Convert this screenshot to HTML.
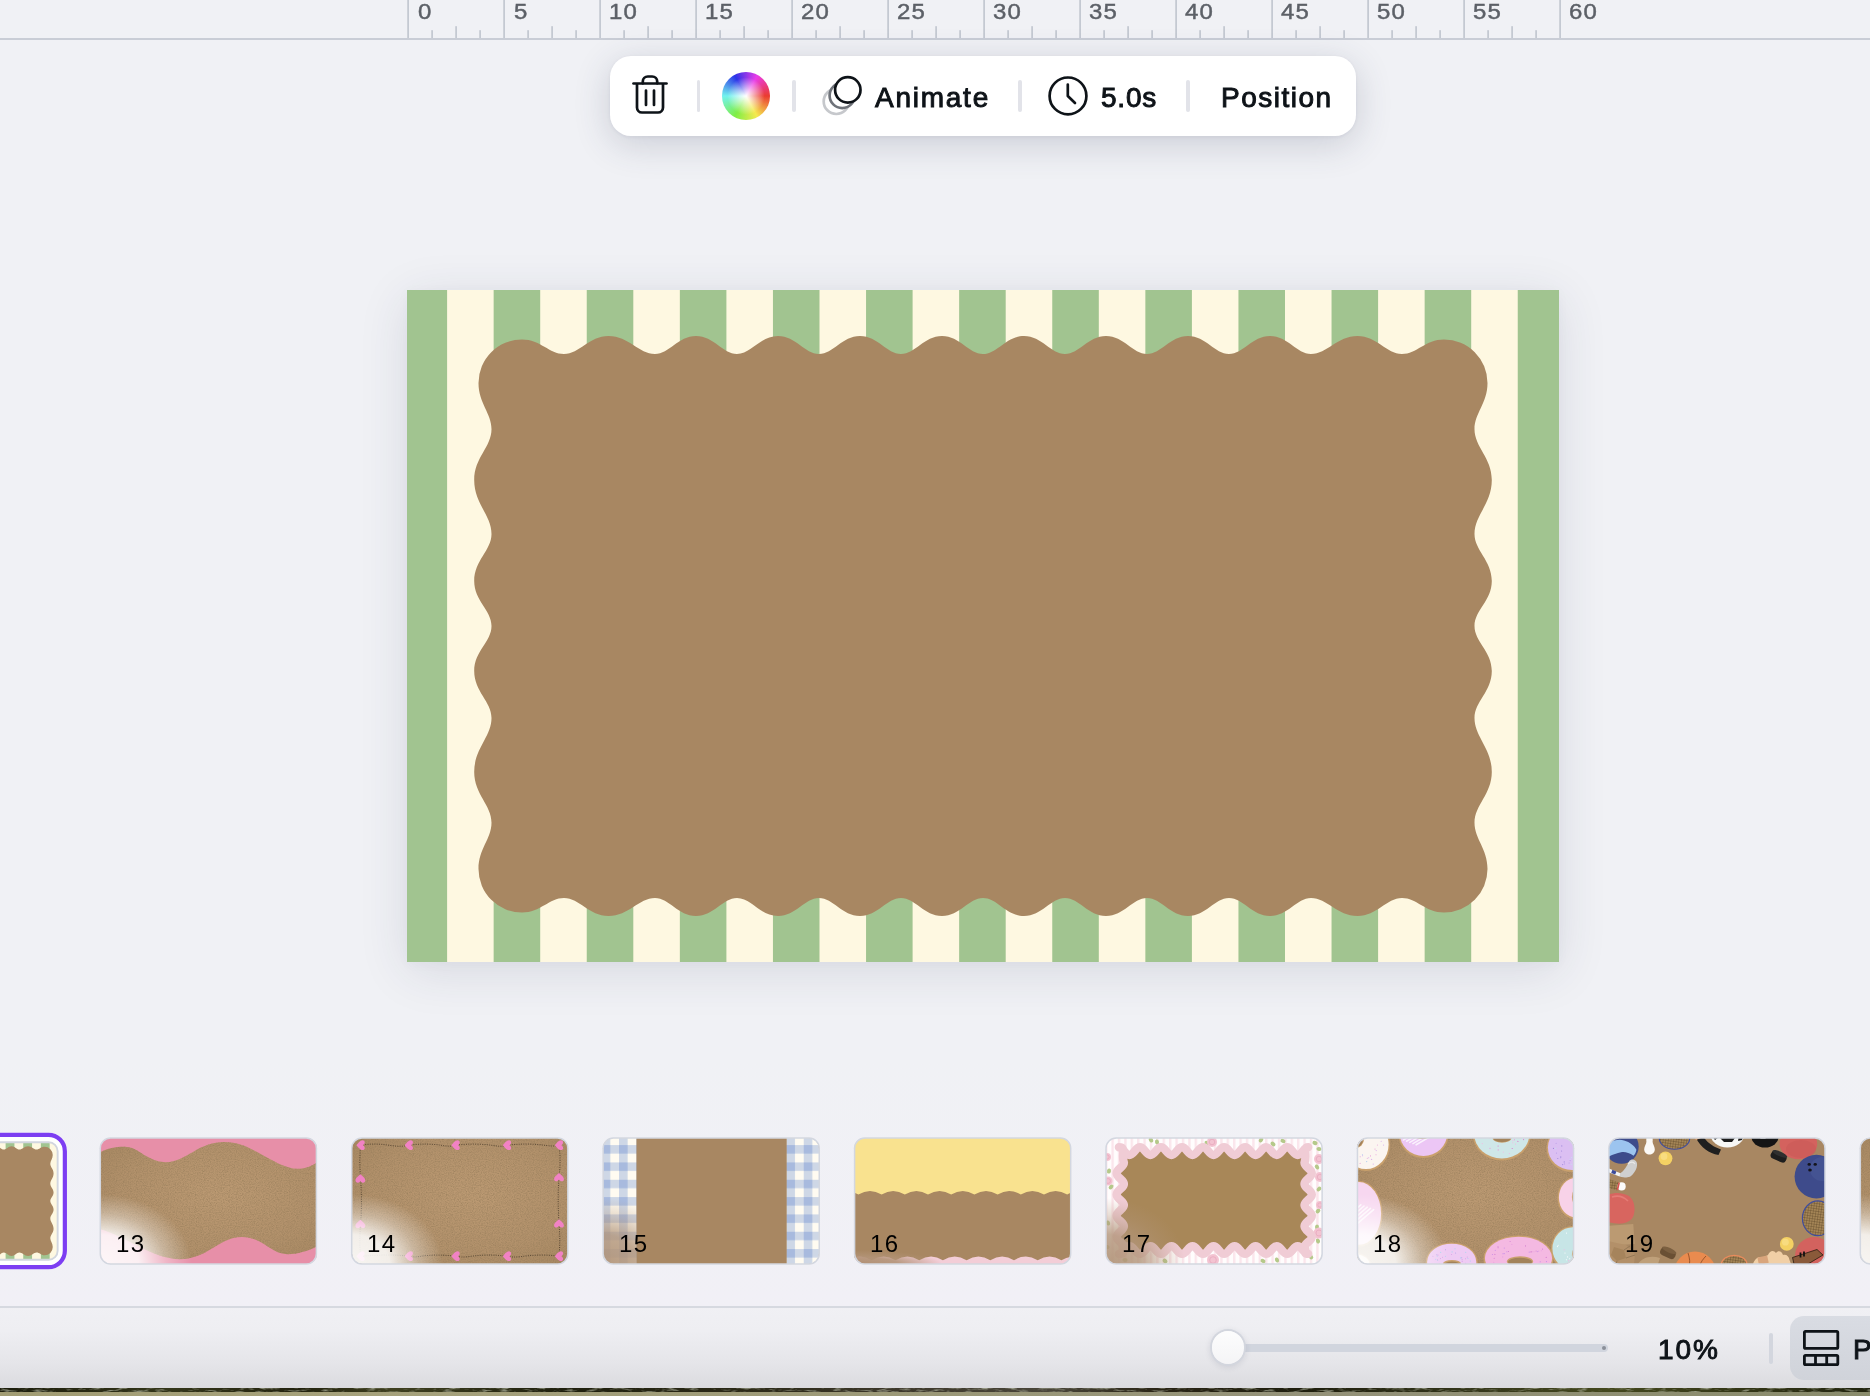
<!DOCTYPE html>
<html><head><meta charset="utf-8"><title>Canva editor</title>
<style>
html,body{margin:0;padding:0}
body{width:1870px;height:1396px;overflow:hidden;position:relative;background:#f0f1f5;font-family:"Liberation Sans",sans-serif;color:#0e1318}
.abs{position:absolute}
/* ruler */
#ruler{position:absolute;left:0;top:0;width:1870px;height:40px}
#ruler .line{position:absolute;left:0;top:38px;width:1870px;height:2px;background:#c9cdd6}
#ruler .num{position:absolute;top:0;font-size:22px;line-height:24px;color:#5c6067;letter-spacing:.2px;-webkit-text-stroke:.45px #5c6067;transform:scaleX(1.09);transform-origin:0 0}
/* toolbar */
#tb{position:absolute;left:610px;top:56px;width:746px;height:80px;background:#fff;border-radius:21px;box-shadow:0 8px 36px rgba(52,62,92,.20),0 1px 4px rgba(52,62,92,.07)}
#tb .sep{position:absolute;top:24px;width:3.5px;height:32px;border-radius:2px;background:#e2e3e9}
#tb .lbl{position:absolute;top:25.8px;font-size:28px;line-height:31px;font-weight:normal;-webkit-text-stroke:.95px #0e1318;color:#0e1318;white-space:nowrap}
/* canvas */
#cv{position:absolute;left:407px;top:290px;width:1152px;height:672px;box-shadow:0 9px 46px rgba(40,50,84,.12),0 2px 12px rgba(40,50,84,.03)}
#cv svg{display:block}
/* thumbs */
.th{position:absolute;top:1137.2px;width:217.6px;height:127.5px}
.th .in{position:absolute;left:.6px;top:.6px;right:.6px;bottom:.6px;border-radius:10.2px;overflow:hidden;background:#a88762}
.th .in svg{position:absolute;left:-.6px;top:-.3px;display:block}
.th .n{position:absolute;left:16.4px;top:94.2px;font-size:24px;line-height:26px;letter-spacing:1.4px;color:#000}
/* bottom */
#bar{position:absolute;left:0;top:1306px;width:1870px;height:82px;background:linear-gradient(#f0f0f4 0,#eeeef2 30%,#e5e5e9 70%,#dbdbdf 100%)}
#bar .top{position:absolute;left:0;top:0;width:100%;height:2px;background:#d6d9e0}
.num,.lbl,.n,.t{will-change:transform}

</style></head>
<body>
<svg width="0" height="0" style="position:absolute">
<defs>
<symbol id="art" viewBox="0 0 1152 672" preserveAspectRatio="none">
<rect width="1152" height="672" fill="#fef8e1"/>
<g fill="#a1c490"><rect x="-6.45" y="0" width="46.55" height="672"/><rect x="86.65" y="0" width="46.55" height="672"/><rect x="179.75" y="0" width="46.55" height="672"/><rect x="272.85" y="0" width="46.55" height="672"/><rect x="365.95" y="0" width="46.55" height="672"/><rect x="459.05" y="0" width="46.55" height="672"/><rect x="552.15" y="0" width="46.55" height="672"/><rect x="645.25" y="0" width="46.55" height="672"/><rect x="738.35" y="0" width="46.55" height="672"/><rect x="831.45" y="0" width="46.55" height="672"/><rect x="924.55" y="0" width="46.55" height="672"/><rect x="1017.65" y="0" width="46.55" height="672"/><rect x="1110.75" y="0" width="46.55" height="672"/></g>
<path fill="#a88762" d="M115 49.5C133.48 49.5 142.3 64 157 64C172.57 64 181.92 46 201.5 46C221.96 46 231.72 64 248 64C262.35 64 270.96 46 289 46C307.04 46 315.65 64 330 64C344.35 64 352.96 46 371 46C389.04 46 397.65 64 412 64C426.35 64 434.96 46 453 46C471.04 46 479.65 64 494 64C508.35 64 516.96 46 535 46C553.04 46 561.65 64 576 64C590.35 64 598.96 46 617 46C635.04 46 643.65 64 658 64C672.35 64 680.96 46 699 46C717.04 46 725.65 64 740 64C754.35 64 762.96 46 781 46C799.04 46 807.65 64 822 64C836.35 64 844.96 46 863 46C881.04 46 889.65 64 904 64C920.27 64 930.04 46 950.5 46C970.08 46 979.42 64 995 64C1009.7 64 1018.52 49.5 1037 49.5A43.5 43.5 0 0 1 1080.5 93C1080.5 113.37 1067.5 123.1 1067.5 139.3C1067.5 157.05 1084.8 167.69 1084.8 190C1084.8 213.76 1067.5 225.1 1067.5 244C1067.5 260.45 1084.8 270.32 1084.8 291C1084.8 310.8 1067.5 320.25 1067.5 336C1067.5 351.75 1084.8 361.2 1084.8 381C1084.8 401.68 1067.5 411.55 1067.5 428C1067.5 446.9 1084.8 458.24 1084.8 482C1084.8 504.31 1067.5 514.96 1067.5 532.7C1067.5 548.9 1080.5 558.63 1080.5 579A43.5 43.5 0 0 1 1037 622.5C1018.52 622.5 1009.7 608 995 608C979.42 608 970.08 626 950.5 626C930.04 626 920.27 608 904 608C889.65 608 881.04 626 863 626C844.96 626 836.35 608 822 608C807.65 608 799.04 626 781 626C762.96 626 754.35 608 740 608C725.65 608 717.04 626 699 626C680.96 626 672.35 608 658 608C643.65 608 635.04 626 617 626C598.96 626 590.35 608 576 608C561.65 608 553.04 626 535 626C516.96 626 508.35 608 494 608C479.65 608 471.04 626 453 626C434.96 626 426.35 608 412 608C397.65 608 389.04 626 371 626C352.96 626 344.35 608 330 608C315.65 608 307.04 626 289 626C270.96 626 262.35 608 248 608C231.72 608 221.96 626 201.5 626C181.92 626 172.57 608 157 608C142.3 608 133.48 622.5 115 622.5A43.5 43.5 0 0 1 71.5 579C71.5 558.63 84.5 548.9 84.5 532.7C84.5 514.96 67.2 504.31 67.2 482C67.2 458.24 84.5 446.9 84.5 428C84.5 411.55 67.2 401.68 67.2 381C67.2 361.2 84.5 351.75 84.5 336C84.5 320.25 67.2 310.8 67.2 291C67.2 270.32 84.5 260.45 84.5 244C84.5 225.1 67.2 213.76 67.2 190C67.2 167.69 84.5 157.05 84.5 139.3C84.5 123.1 71.5 113.37 71.5 93A43.5 43.5 0 0 1 115 49.5Z"/>
</symbol>
</defs>
</svg>
<div id="ruler"><svg class="abs" style="left:0;top:0" width="1870" height="40"><g fill="#c2c7d0"><rect x="407.25" y="0" width="1.7" height="38.5" /><rect x="431.25" y="30.2" width="1.7" height="8.3"/><rect x="455.25" y="26.2" width="1.7" height="12.3"/><rect x="479.25" y="30.2" width="1.7" height="8.3"/><rect x="503.25" y="0" width="1.7" height="38.5" /><rect x="527.25" y="30.2" width="1.7" height="8.3"/><rect x="551.25" y="26.2" width="1.7" height="12.3"/><rect x="575.25" y="30.2" width="1.7" height="8.3"/><rect x="599.25" y="0" width="1.7" height="38.5" /><rect x="623.25" y="30.2" width="1.7" height="8.3"/><rect x="647.25" y="26.2" width="1.7" height="12.3"/><rect x="671.25" y="30.2" width="1.7" height="8.3"/><rect x="695.25" y="0" width="1.7" height="38.5" /><rect x="719.25" y="30.2" width="1.7" height="8.3"/><rect x="743.25" y="26.2" width="1.7" height="12.3"/><rect x="767.25" y="30.2" width="1.7" height="8.3"/><rect x="791.25" y="0" width="1.7" height="38.5" /><rect x="815.25" y="30.2" width="1.7" height="8.3"/><rect x="839.25" y="26.2" width="1.7" height="12.3"/><rect x="863.25" y="30.2" width="1.7" height="8.3"/><rect x="887.25" y="0" width="1.7" height="38.5" /><rect x="911.25" y="30.2" width="1.7" height="8.3"/><rect x="935.25" y="26.2" width="1.7" height="12.3"/><rect x="959.25" y="30.2" width="1.7" height="8.3"/><rect x="983.25" y="0" width="1.7" height="38.5" /><rect x="1007.25" y="30.2" width="1.7" height="8.3"/><rect x="1031.25" y="26.2" width="1.7" height="12.3"/><rect x="1055.25" y="30.2" width="1.7" height="8.3"/><rect x="1079.25" y="0" width="1.7" height="38.5" /><rect x="1103.25" y="30.2" width="1.7" height="8.3"/><rect x="1127.25" y="26.2" width="1.7" height="12.3"/><rect x="1151.25" y="30.2" width="1.7" height="8.3"/><rect x="1175.25" y="0" width="1.7" height="38.5" /><rect x="1199.25" y="30.2" width="1.7" height="8.3"/><rect x="1223.25" y="26.2" width="1.7" height="12.3"/><rect x="1247.25" y="30.2" width="1.7" height="8.3"/><rect x="1271.25" y="0" width="1.7" height="38.5" /><rect x="1295.25" y="30.2" width="1.7" height="8.3"/><rect x="1319.25" y="26.2" width="1.7" height="12.3"/><rect x="1343.25" y="30.2" width="1.7" height="8.3"/><rect x="1367.25" y="0" width="1.7" height="38.5" /><rect x="1391.25" y="30.2" width="1.7" height="8.3"/><rect x="1415.25" y="26.2" width="1.7" height="12.3"/><rect x="1439.25" y="30.2" width="1.7" height="8.3"/><rect x="1463.25" y="0" width="1.7" height="38.5" /><rect x="1487.25" y="30.2" width="1.7" height="8.3"/><rect x="1511.25" y="26.2" width="1.7" height="12.3"/><rect x="1535.25" y="30.2" width="1.7" height="8.3"/><rect x="1559.25" y="0" width="1.7" height="38.5" /></g></svg><div class="line"></div><div class="num" style="left:418.1px">0</div><div class="num" style="left:514.1px">5</div><div class="num" style="left:608.9px;letter-spacing:1.1px">10</div><div class="num" style="left:704.9px;letter-spacing:1.1px">15</div><div class="num" style="left:800.9px;letter-spacing:1.1px">20</div><div class="num" style="left:896.9px;letter-spacing:1.1px">25</div><div class="num" style="left:992.9px;letter-spacing:1.1px">30</div><div class="num" style="left:1088.9px;letter-spacing:1.1px">35</div><div class="num" style="left:1184.9px;letter-spacing:1.1px">40</div><div class="num" style="left:1280.9px;letter-spacing:1.1px">45</div><div class="num" style="left:1376.9px;letter-spacing:1.1px">50</div><div class="num" style="left:1472.9px;letter-spacing:1.1px">55</div><div class="num" style="left:1568.9px;letter-spacing:1.1px">60</div></div>

<div id="tb">
<svg class="abs" style="left:0;top:0" width="746" height="80" viewBox="610 56 746 80" fill="none" stroke="#0e1318" stroke-width="2.7" stroke-linecap="round" stroke-linejoin="round">
<!-- trash -->
<path d="M633.5 83.5H666.5"/>
<path d="M642.8 83.3V81.5a5 5 0 0 1 5-5h4.4a5 5 0 0 1 5 5V83.3"/>
<path d="M637 84.5V107.5a5 5 0 0 0 5 5h16a5 5 0 0 0 5-5V84.5"/>
<path d="M646 90.5V105M654 90.5V105"/>
<!-- animate -->
<circle cx="836.3" cy="101.4" r="12.6" stroke="#c6c8cc"/>
<circle cx="842.2" cy="95.5" r="12.6" stroke="#6f737a" fill="#fff"/>
<circle cx="847.8" cy="89.9" r="12.7" fill="#fff"/>
<!-- clock -->
<circle cx="1068" cy="95.9" r="18.4"/>
<path d="M1067.8 84.5V96L1075 103"/>
</svg>
<div class="abs" style="left:112px;top:16px;width:48px;height:48px;border-radius:50%;background:radial-gradient(circle closest-side,#fff 0,rgba(255,255,255,.85) 12%,rgba(255,255,255,0) 78%),conic-gradient(from 90deg,#ea3c30,#f5e94f 17%,#7fee45 33%,#72f2ee 50%,#2b34e8 67%,#e93ce8 83%,#ea3c30)"></div>
<div class="sep" style="left:86.5px"></div>
<div class="sep" style="left:182.2px"></div>
<div class="sep" style="left:408.2px"></div>
<div class="sep" style="left:576.2px"></div>
<div class="lbl" style="left:264.8px;letter-spacing:1.75px">Animate</div>
<div class="lbl" style="left:491.3px;letter-spacing:.8px">5.0s</div>
<div class="lbl" style="left:610.8px;letter-spacing:1.5px">Position</div>
</div>

<div id="cv"><svg width="1152" height="672"><use href="#art" width="1152" height="672"/></svg></div>

<div id="stripbg" class="abs" style="left:0;top:1060px;width:1870px;height:246px;background:linear-gradient(#f0f1f5,#f1f0f6)"></div>
<svg width="0" height="0" style="position:absolute"><defs>
<filter id="grain" x="0" y="0" width="100%" height="100%"><feTurbulence type="fractalNoise" baseFrequency="0.85" numOctaves="2" seed="7" result="n"/><feColorMatrix in="n" type="matrix" values="0 0 0 0 0.3  0 0 0 0 0.2  0 0 0 0 0.1  0.8 0.8 0.8 0 -1.02"/></filter>
<radialGradient id="kraft" cx="55%" cy="45%" r="75%"><stop offset="0" stop-color="#bc9a73"/><stop offset="0.6" stop-color="#b2916b"/><stop offset="1" stop-color="#a58660"/></radialGradient>
<radialGradient id="fadeW" gradientUnits="userSpaceOnUse" cx="0" cy="127" r="1" gradientTransform="translate(0 127) scale(92 70) translate(0 -127)"><stop offset="0" stop-color="#fff" stop-opacity=".92"/><stop offset=".42" stop-color="#fff" stop-opacity=".86"/><stop offset=".72" stop-color="#fff" stop-opacity=".35"/><stop offset="1" stop-color="#fff" stop-opacity="0"/></radialGradient>
<radialGradient id="fadeB" gradientUnits="userSpaceOnUse" cx="0" cy="127" r="1" gradientTransform="translate(0 127) scale(80 66) translate(0 -127)"><stop offset="0" stop-color="#b2957a" stop-opacity=".95"/><stop offset=".45" stop-color="#b2957a" stop-opacity=".8"/><stop offset=".75" stop-color="#b2957a" stop-opacity=".3"/><stop offset="1" stop-color="#b2957a" stop-opacity="0"/></radialGradient>
</defs></svg>

<!-- selected thumb 12 -->
<svg class="abs" style="left:0;top:1125px" width="80" height="150" viewBox="0 1125 80 150">
<defs><clipPath id="csel"><rect x="-160" y="1142.2" width="217.65" height="117.6" rx="9"/></clipPath></defs>
<rect x="-160" y="1132.7" width="226.9" height="136.6" rx="18.5" fill="#fff"/>
<g clip-path="url(#csel)"><use href="#art" x="-151.8" y="1137.5" width="218.1" height="127.2"/></g>
<rect x="-160" y="1142.2" width="217.65" height="117.6" rx="9" fill="none" stroke="#d2d6df" stroke-width="1.9"/>
<rect x="-160" y="1134.8" width="224.85" height="132.4" rx="16.4" fill="none" stroke="#7d3ef2" stroke-width="4.2"/>
</svg>

<!-- 13 -->
<div class="th" style="left:99.55px"><div class="in" style="background:#e78fa8"><svg width="218" height="127" viewBox="0 0 218 127">
<path id="w13" fill="url(#kraft)" d="M0 15.5C8 11 18 9.5 25 9.8C36 10.5 40 16 46 19C54 23.5 60 25.2 66 25.2C76 25 84 20 93 15C104 8.5 113 5.1 124 5.1C137 5.1 147 9.5 157 15C172 23 185 31.8 198 31.8C206 31.8 212 29 218 24.5L218 109C208 114 198 117.2 188 117.2C180 117 175 114 170 111C160 104 152 99.9 142 99.9C130 100 121 106 112 111.5C102 118 91 122.3 80 122.3C66 122 52 116 42 111C28 104 14 96 0 92Z"/>
<rect width="218" height="127" filter="url(#grain)" clip-path="url(#c13)"/>
<clipPath id="c13"><use href="#w13"/></clipPath>
<rect width="218" height="127" fill="url(#fadeW)"/>
</svg></div><div class="n">13</div></div>

<!-- 14 -->
<div class="th" style="left:350.98px"><div class="in"><svg width="218" height="127" viewBox="0 0 218 127">
<rect width="218" height="127" fill="url(#kraft)"/><rect width="218" height="127" filter="url(#grain)"/>
<path fill="none" stroke="#2e241a" stroke-opacity=".75" stroke-width=".9" stroke-dasharray="1 1.3" d="M9.6 8.2C20 6.5 30 6.8 40 8.6C48 9.6 52 9.4 57.8 8.2C70 6.5 82 6.8 92 8.6C98 9.6 101 9.2 104.6 8.2C118 6.5 132 6.8 144 8.8C150 9.6 153 9.2 156 8.2C170 6.5 184 6.8 196 8.6C202 9.4 205 9 208 8.2C209.5 18 209.3 30 208 40.5C206.8 55 207 70 208 86.5C209 98 209 108 208 119.2C196 117.5 182 117.8 170 119.6C164 120.4 160 120 156 119.2C142 117.5 130 117.8 118 119.6C112 120.4 108 120 104.6 119.2C90 117.5 78 117.8 68 119.6C64 120.2 61 120 57.8 119.2C44 117.5 30 117.8 9.6 119.2C8.4 108 8.6 98 9.6 87C10.8 72 10.6 56 9.6 41.5C8.6 30 8.6 18 9.6 8.2Z"/>
<g fill="#f182c4">
<path id="hL" d="M0 4.2C-1.6 2.6 -4.9 .6 -4.9 -2C-4.9 -4.6 -1.5 -5 0 -2.4C1.5 -5 4.9 -4.6 4.9 -2C4.9 .6 1.6 2.6 0 4.2Z" transform="translate(9.6 8.2) rotate(90)"/>
<use href="#hL" x="48.2"/><use href="#hL" x="95"/><use href="#hL" x="146.4"/><use href="#hL" x="198.4"/>
<use href="#hL" y="111"/><use href="#hL" x="48.2" y="111"/><use href="#hL" x="95" y="111"/><use href="#hL" x="146.4" y="111"/><use href="#hL" x="198.4" y="111"/>
<path id="hU" d="M0 4.2C-1.6 2.6 -4.9 .6 -4.9 -2C-4.9 -4.6 -1.5 -5 0 -2.4C1.5 -5 4.9 -4.6 4.9 -2C4.9 .6 1.6 2.6 0 4.2Z" transform="translate(9.4 41.5) rotate(180)"/>
<use href="#hU" y="45.5"/><use href="#hU" x="198.6" y="-1.3"/><use href="#hU" x="198.6" y="44.9"/>
</g>
<rect width="218" height="127" fill="url(#fadeW)"/>
</svg></div><div class="n">14</div></div>

<!-- 15 -->
<div class="th" style="left:602.41px"><div class="in"><svg width="218" height="127" viewBox="0 0 218 127">
<defs><pattern id="gl" patternUnits="userSpaceOnUse" x="-.3" y="8.1" width="17.33" height="17.33"><rect width="17.33" height="17.33" fill="#fffbf1"/><rect width="8.6" height="17.33" fill="#9db4dc" fill-opacity=".5"/><rect width="17.33" height="8.5" fill="#9db4dc" fill-opacity=".5"/><rect width="8.6" height="8.5" fill="#8ea6d8" fill-opacity=".35"/></pattern>
<pattern id="gr" patternUnits="userSpaceOnUse" x="184.4" y="8.1" width="17.33" height="17.33"><rect width="17.33" height="17.33" fill="#fffbf1"/><rect width="8.6" height="17.33" fill="#9db4dc" fill-opacity=".5"/><rect width="17.33" height="8.5" fill="#9db4dc" fill-opacity=".5"/><rect width="8.6" height="8.5" fill="#8ea6d8" fill-opacity=".35"/></pattern></defs>
<rect width="34.7" height="127" fill="url(#gl)"/><rect x="184.4" width="33.6" height="127" fill="url(#gr)"/>
<rect width="34.7" height="127" fill="url(#fadeB)"/>
<rect x="34.6" width="149.9" height="127" fill="#a88762"/>
</svg></div><div class="n">15</div></div>

<!-- 16 -->
<div class="th" style="left:853.84px"><div class="in" style="background:#f9e28f"><svg width="218" height="127" viewBox="0 0 218 127">
<rect y="112" width="218" height="15" fill="#f3cdd7"/>
<path fill="#a88762" d="M-18.8 57.6Q-7.2 50.6 4.4 57.6Q16.0 50.6 27.6 57.6Q39.2 50.6 50.8 57.6Q62.4 50.6 74.0 57.6Q85.6 50.6 97.2 57.6Q108.8 50.6 120.4 57.6Q132.0 50.6 143.6 57.6Q155.2 50.6 166.8 57.6Q178.4 50.6 190.0 57.6Q201.6 50.6 213.2 57.6Q224.8 50.6 236.4 57.6L231.1 123.2Q219.3 116 207.4 123.2Q195.6 116 183.7 123.2Q171.9 116 160.0 123.2Q148.2 116 136.3 123.2Q124.5 116 112.6 123.2Q100.8 116 88.9 123.2Q77.1 116 65.2 123.2Q53.4 116 41.5 123.2Q29.7 116 17.8 123.2Q6.0 116 -5.9 123.2Q-17.7 116 -29.6 123.2Z"/>
<radialGradient id="f16" gradientUnits="userSpaceOnUse" cx="0" cy="127" r="1" gradientTransform="translate(0 127) scale(88 14) translate(0 -127)"><stop offset="0" stop-color="#b08f72" stop-opacity="1"/><stop offset=".5" stop-color="#b39478" stop-opacity=".9"/><stop offset="1" stop-color="#b39478" stop-opacity="0"/></radialGradient>
<rect y="110" width="100" height="17" fill="url(#f16)"/>
</svg></div><div class="n">16</div></div>

<!-- 17 -->
<div class="th" style="left:1105.27px"><div class="in" style="background:#fff"><svg width="218" height="127" viewBox="0 0 218 127">
<defs><pattern id="ps" patternUnits="userSpaceOnUse" width="6.4" height="10"><rect width="6.4" height="10" fill="#fffdfd"/><rect x="0" width="2.4" height="10" fill="#fbe6ec"/></pattern></defs>
<rect width="218" height="127" fill="url(#ps)"/>
<ellipse cx="46" cy="3" rx="2.6" ry="2" fill="#b5c98a" transform="rotate(60 46 3)"/><ellipse cx="52" cy="5" rx="2.6" ry="2" fill="#b5c98a" transform="rotate(77 52 5)"/><ellipse cx="102" cy="6" rx="2.6" ry="2" fill="#b5c98a" transform="rotate(26 102 6)"/><ellipse cx="108" cy="3" rx="2.6" ry="2" fill="#b5c98a" transform="rotate(101 108 3)"/><ellipse cx="156" cy="3" rx="2.6" ry="2" fill="#b5c98a" transform="rotate(122 156 3)"/><ellipse cx="168" cy="7" rx="2.6" ry="2" fill="#b5c98a" transform="rotate(39 168 7)"/><ellipse cx="178" cy="4" rx="2.6" ry="2" fill="#b5c98a" transform="rotate(23 178 4)"/><ellipse cx="210" cy="6" rx="2.6" ry="2" fill="#b5c98a" transform="rotate(17 210 6)"/><ellipse cx="214" cy="12" rx="2.6" ry="2" fill="#b5c98a" transform="rotate(5 214 12)"/><ellipse cx="4" cy="34" rx="2.6" ry="2" fill="#b5c98a" transform="rotate(102 4 34)"/><ellipse cx="6" cy="50" rx="2.6" ry="2" fill="#b5c98a" transform="rotate(140 6 50)"/><ellipse cx="3" cy="86" rx="2.6" ry="2" fill="#b5c98a" transform="rotate(74 3 86)"/><ellipse cx="2" cy="110" rx="2.6" ry="2" fill="#b5c98a" transform="rotate(15 2 110)"/><ellipse cx="212" cy="30" rx="2.6" ry="2" fill="#b5c98a" transform="rotate(56 212 30)"/><ellipse cx="214" cy="52" rx="2.6" ry="2" fill="#b5c98a" transform="rotate(133 214 52)"/><ellipse cx="213" cy="74" rx="2.6" ry="2" fill="#b5c98a" transform="rotate(137 213 74)"/><ellipse cx="212" cy="90" rx="2.6" ry="2" fill="#b5c98a" transform="rotate(92 212 90)"/><ellipse cx="213" cy="104" rx="2.6" ry="2" fill="#b5c98a" transform="rotate(70 213 104)"/><ellipse cx="60" cy="124" rx="2.6" ry="2" fill="#b5c98a" transform="rotate(44 60 124)"/><ellipse cx="158" cy="124" rx="2.6" ry="2" fill="#b5c98a" transform="rotate(27 158 124)"/><ellipse cx="172" cy="123" rx="2.6" ry="2" fill="#b5c98a" transform="rotate(67 172 123)"/><ellipse cx="206" cy="120" rx="2.6" ry="2" fill="#b5c98a" transform="rotate(54 206 120)"/><ellipse cx="20" cy="123" rx="2.6" ry="2" fill="#b5c98a" transform="rotate(6 20 123)"/><circle cx="107" cy="5" r="5" fill="#f3c3d1"/><circle cx="107" cy="5" r="2.75" fill="none" stroke="#e7a6bb" stroke-width=".7"/><circle cx="3" cy="44" r="4.5" fill="#f3c3d1"/><circle cx="3" cy="44" r="2.475" fill="none" stroke="#e7a6bb" stroke-width=".7"/><circle cx="214" cy="22" r="5" fill="#f3c3d1"/><circle cx="214" cy="22" r="2.75" fill="none" stroke="#e7a6bb" stroke-width=".7"/><circle cx="215" cy="40" r="5" fill="#f3c3d1"/><circle cx="215" cy="40" r="2.75" fill="none" stroke="#e7a6bb" stroke-width=".7"/><circle cx="214" cy="96" r="5.5" fill="#f3c3d1"/><circle cx="214" cy="96" r="3.025" fill="none" stroke="#e7a6bb" stroke-width=".7"/><circle cx="108" cy="123" r="6" fill="#f3c3d1"/><circle cx="108" cy="123" r="3.3" fill="none" stroke="#e7a6bb" stroke-width=".7"/><circle cx="215" cy="68" r="4" fill="#f3c3d1"/><circle cx="215" cy="68" r="2.2" fill="none" stroke="#e7a6bb" stroke-width=".7"/><circle cx="2" cy="20" r="4" fill="#f3c3d1"/><circle cx="2" cy="20" r="2.2" fill="none" stroke="#e7a6bb" stroke-width=".7"/>
<path d="M13.90 10.30C18.11 10.30 20.21 18.00 24.42 18.00C28.62 18.00 30.73 10.30 34.93 10.30C39.14 10.30 41.24 18.00 45.45 18.00C49.66 18.00 51.76 10.30 55.97 10.30C60.17 10.30 62.28 18.00 66.48 18.00C70.69 18.00 72.79 10.30 77.00 10.30C81.21 10.30 83.31 18.00 87.52 18.00C91.72 18.00 93.83 10.30 98.03 10.30C102.24 10.30 104.34 18.00 108.55 18.00C112.76 18.00 114.86 10.30 119.07 10.30C123.27 10.30 125.38 18.00 129.58 18.00C133.79 18.00 135.89 10.30 140.10 10.30C144.31 10.30 146.41 18.00 150.62 18.00C154.82 18.00 156.93 10.30 161.13 10.30C165.34 10.30 167.44 18.00 171.65 18.00C175.86 18.00 177.96 10.30 182.17 10.30C186.37 10.30 188.48 18.00 192.68 18.00C196.89 18.00 198.99 10.30 203.20 10.30C197.28 10.30 202.50 18.00 199.50 25.70C199.50 29.94 206.80 32.06 206.80 36.30C206.80 40.54 199.50 42.66 199.50 46.90C199.50 51.14 206.80 53.26 206.80 57.50C206.80 61.74 199.50 63.86 199.50 68.10C199.50 72.34 206.80 74.46 206.80 78.70C206.80 82.94 199.50 85.06 199.50 89.30C199.50 93.54 206.80 95.66 206.80 99.90C206.80 104.02 199.50 106.08 199.50 110.20C202.50 113.55 197.28 116.90 203.20 116.90C198.99 116.90 196.89 109.20 192.68 109.20C188.48 109.20 186.37 116.90 182.17 116.90C177.96 116.90 175.86 109.20 171.65 109.20C167.44 109.20 165.34 116.90 161.13 116.90C156.93 116.90 154.82 109.20 150.62 109.20C146.41 109.20 144.31 116.90 140.10 116.90C135.89 116.90 133.79 109.20 129.58 109.20C125.38 109.20 123.27 116.90 119.07 116.90C114.86 116.90 112.76 109.20 108.55 109.20C104.34 109.20 102.24 116.90 98.03 116.90C93.83 116.90 91.72 109.20 87.52 109.20C83.31 109.20 81.21 116.90 77.00 116.90C72.79 116.90 70.69 109.20 66.48 109.20C62.28 109.20 60.17 116.90 55.97 116.90C51.76 116.90 49.66 109.20 45.45 109.20C41.24 109.20 39.14 116.90 34.93 116.90C30.73 116.90 28.62 109.20 24.42 109.20C20.21 109.20 18.11 116.90 13.90 116.90C21.90 116.90 15.90 113.55 18.90 110.20C18.90 106.08 11.60 104.02 11.60 99.90C11.60 95.66 18.90 93.54 18.90 89.30C18.90 85.06 11.60 82.94 11.60 78.70C11.60 74.46 18.90 72.34 18.90 68.10C18.90 63.86 11.60 61.74 11.60 57.50C11.60 53.26 18.90 51.14 18.90 46.90C18.90 42.66 11.60 40.54 11.60 36.30C11.60 32.06 18.90 29.94 18.90 25.70C15.90 18.00 21.90 10.30 13.90 10.30Z" fill="#a88758" stroke="#f0ccd5" stroke-width="8.4" stroke-linejoin="round"/>
<rect width="218" height="127" fill="url(#fadeB)"/>
</svg></div><div class="n">17</div></div>

<!-- 18 -->
<div class="th" style="left:1356.70px"><div class="in"><svg width="218" height="127" viewBox="0 0 218 127">
<rect width="218" height="127" fill="url(#kraft)"/><rect width="218" height="127" filter="url(#grain)"/>
<g><ellipse cx="9" cy="8" rx="24" ry="26" fill="#c9a06c"/><ellipse cx="9" cy="7.6" rx="22.6" ry="24.4" fill="#fbf5f0"/><circle cx="-5.1" cy="12.8" r=".55" fill="#a8c8ee"/><circle cx="-7.7" cy="13.7" r=".55" fill="#e9a6d8"/><circle cx="14.7" cy="22.3" r=".55" fill="#d9b0ee"/><circle cx="0.5" cy="-0.1" r=".55" fill="#a8c8ee"/><circle cx="5.6" cy="18.7" r=".55" fill="#d9b0ee"/><circle cx="-1.0" cy="-4.3" r=".55" fill="#a8c8ee"/><circle cx="24.2" cy="4.2" r=".55" fill="#d9b0ee"/><circle cx="-0.0" cy="-5.6" r=".55" fill="#d9b0ee"/><circle cx="18.0" cy="12.1" r=".55" fill="#e9a6d8"/><circle cx="-4.6" cy="-2.8" r=".55" fill="#a8c8ee"/><circle cx="-7.2" cy="15.0" r=".55" fill="#d9b0ee"/><circle cx="10.3" cy="21.3" r=".55" fill="#e9a6d8"/><circle cx="1.8" cy="-4.9" r=".55" fill="#a8c8ee"/><circle cx="-3.2" cy="16.9" r=".55" fill="#e9a6d8"/><circle cx="5.7" cy="-5.1" r=".55" fill="#e9a6d8"/><circle cx="-0.7" cy="7.1" r=".55" fill="#d9b0ee"/><circle cx="10.4" cy="-6.4" r=".55" fill="#a8c8ee"/><circle cx="-5.0" cy="21.3" r=".55" fill="#d9b0ee"/><circle cx="20.4" cy="8.0" r=".55" fill="#e9a6d8"/><circle cx="-9.4" cy="11.8" r=".55" fill="#a8c8ee"/><circle cx="-4.0" cy="15.8" r=".55" fill="#e9a6d8"/><circle cx="11.1" cy="-4.9" r=".55" fill="#e9a6d8"/><circle cx="5.4" cy="17.7" r=".55" fill="#a8c8ee"/><circle cx="9.5" cy="-3.6" r=".55" fill="#e9a6d8"/><circle cx="6.4" cy="-2.1" r=".55" fill="#a8c8ee"/><circle cx="12.2" cy="-3.7" r=".55" fill="#d9b0ee"/><circle cx="14.4" cy="22.5" r=".55" fill="#d9b0ee"/><circle cx="10.6" cy="-6.6" r=".55" fill="#a8c8ee"/><circle cx="19.0" cy="17.8" r=".55" fill="#e9a6d8"/><circle cx="26.6" cy="8.1" r=".55" fill="#d9b0ee"/><circle cx="3.1" cy="26.4" r=".55" fill="#e9a6d8"/><circle cx="16.2" cy="27.1" r=".55" fill="#d9b0ee"/><circle cx="2.5" cy="-0.9" r=".55" fill="#e9a6d8"/><circle cx="11.7" cy="20.7" r=".55" fill="#d9b0ee"/><circle cx="3.2" cy="19.8" r=".55" fill="#e9a6d8"/><circle cx="19.2" cy="13.6" r=".55" fill="#d9b0ee"/><circle cx="9.7" cy="24.6" r=".55" fill="#a8c8ee"/><circle cx="1.3" cy="-0.1" r=".55" fill="#d9b0ee"/><circle cx="-5.8" cy="9.7" r=".55" fill="#a8c8ee"/><circle cx="13.5" cy="18.9" r=".55" fill="#e9a6d8"/><ellipse cx="-2" cy="2" rx="9.1" ry="9.1" fill="#c9a06c"/><ellipse cx="-2" cy="2.5" rx="8" ry="8" fill="#a2825a"/></g><g><ellipse cx="66.5" cy="-3" rx="25" ry="24" fill="#c9a06c"/><ellipse cx="66.5" cy="-3.4" rx="23.6" ry="22.4" fill="#ecc6f5"/><path d="M46.35 3 l22.5 -13.2" stroke="#fff" stroke-opacity=".75" stroke-width="1.6" stroke-linecap="round"/><path d="M49.55 4.2 l22.5 -13.2" stroke="#fff" stroke-opacity=".75" stroke-width="1.6" stroke-linecap="round"/><path d="M52.75 5.4 l22.5 -13.2" stroke="#fff" stroke-opacity=".75" stroke-width="1.6" stroke-linecap="round"/><path d="M55.95 6.6 l22.5 -13.2" stroke="#fff" stroke-opacity=".75" stroke-width="1.6" stroke-linecap="round"/><path d="M59.15 7.8 l22.5 -13.2" stroke="#fff" stroke-opacity=".75" stroke-width="1.6" stroke-linecap="round"/><ellipse cx="65" cy="-4" rx="10.1" ry="6.1" fill="#c9a06c"/><ellipse cx="65" cy="-3.5" rx="9" ry="5" fill="#a2825a"/></g><g><ellipse cx="144.8" cy="-3" rx="29" ry="26.5" fill="#c9a06c"/><ellipse cx="144.8" cy="-3.4" rx="27.6" ry="24.9" fill="#cfe7e8"/><circle cx="150.8" cy="-15.0" r=".55" fill="#ee8fd6"/><circle cx="155.2" cy="11.5" r=".55" fill="#e070c8"/><circle cx="152.3" cy="16.5" r=".55" fill="#f4b8e4"/><circle cx="131.6" cy="-12.1" r=".55" fill="#ee8fd6"/><circle cx="158.5" cy="7.1" r=".55" fill="#f4b8e4"/><circle cx="146.3" cy="15.0" r=".55" fill="#f4b8e4"/><circle cx="125.2" cy="6.6" r=".55" fill="#f4b8e4"/><circle cx="141.1" cy="9.0" r=".55" fill="#e070c8"/><circle cx="157.8" cy="-4.7" r=".55" fill="#f4b8e4"/><circle cx="124.6" cy="-10.1" r=".55" fill="#e070c8"/><circle cx="157.5" cy="2.8" r=".55" fill="#ee8fd6"/><circle cx="144.7" cy="-14.3" r=".55" fill="#f4b8e4"/><circle cx="133.1" cy="0.8" r=".55" fill="#ee8fd6"/><circle cx="141.2" cy="12.9" r=".55" fill="#ee8fd6"/><circle cx="155.9" cy="3.6" r=".55" fill="#f4b8e4"/><circle cx="164.0" cy="-5.1" r=".55" fill="#e070c8"/><circle cx="122.2" cy="-5.8" r=".55" fill="#e070c8"/><circle cx="156.4" cy="-0.6" r=".55" fill="#f4b8e4"/><circle cx="137.8" cy="-22.8" r=".55" fill="#ee8fd6"/><circle cx="134.6" cy="-9.6" r=".55" fill="#ee8fd6"/><circle cx="142.9" cy="-16.8" r=".55" fill="#ee8fd6"/><circle cx="160.9" cy="4.4" r=".55" fill="#e070c8"/><circle cx="166.6" cy="2.6" r=".55" fill="#e070c8"/><circle cx="138.8" cy="-21.2" r=".55" fill="#f4b8e4"/><circle cx="133.0" cy="11.3" r=".55" fill="#ee8fd6"/><circle cx="156.2" cy="-13.9" r=".55" fill="#ee8fd6"/><circle cx="156.8" cy="-15.6" r=".55" fill="#e070c8"/><circle cx="136.3" cy="-15.4" r=".55" fill="#ee8fd6"/><circle cx="135.0" cy="-10.2" r=".55" fill="#e070c8"/><circle cx="155.8" cy="5.8" r=".55" fill="#f4b8e4"/><circle cx="142.6" cy="-17.5" r=".55" fill="#e070c8"/><circle cx="138.9" cy="-17.5" r=".55" fill="#f4b8e4"/><circle cx="151.5" cy="-12.7" r=".55" fill="#e070c8"/><circle cx="163.2" cy="0.2" r=".55" fill="#f4b8e4"/><ellipse cx="145" cy="1" rx="9.6" ry="4.7" fill="#c9a06c"/><ellipse cx="145" cy="1.5" rx="8.5" ry="3.6" fill="#a2825a"/></g><g><ellipse cx="215" cy="11" rx="25.5" ry="24" fill="#c9a06c"/><ellipse cx="215" cy="10.6" rx="24.1" ry="22.4" fill="#dbbff2"/><circle cx="234.6" cy="13.6" r=".55" fill="#9d86d8"/><circle cx="198.7" cy="11.3" r=".55" fill="#c3e2f2"/><circle cx="214.6" cy="20.6" r=".55" fill="#c3e2f2"/><circle cx="225.1" cy="22.9" r=".55" fill="#b79be8"/><circle cx="224.3" cy="26.8" r=".55" fill="#b79be8"/><circle cx="228.7" cy="5.0" r=".55" fill="#9d86d8"/><circle cx="207.2" cy="24.9" r=".55" fill="#9d86d8"/><circle cx="202.9" cy="-1.7" r=".55" fill="#9d86d8"/><circle cx="225.2" cy="2.1" r=".55" fill="#b79be8"/><circle cx="225.8" cy="5.5" r=".55" fill="#9d86d8"/><circle cx="196.4" cy="11.4" r=".55" fill="#9d86d8"/><circle cx="210.2" cy="-6.9" r=".55" fill="#c3e2f2"/><circle cx="219.9" cy="1.5" r=".55" fill="#c3e2f2"/><circle cx="213.1" cy="22.3" r=".55" fill="#c3e2f2"/><circle cx="203.6" cy="20.7" r=".55" fill="#b79be8"/><circle cx="207.6" cy="26.9" r=".55" fill="#b79be8"/><circle cx="204.6" cy="14.0" r=".55" fill="#9d86d8"/><circle cx="212.1" cy="26.0" r=".55" fill="#b79be8"/><circle cx="210.9" cy="-3.3" r=".55" fill="#c3e2f2"/><circle cx="205.6" cy="-0.9" r=".55" fill="#b79be8"/><circle cx="224.7" cy="21.4" r=".55" fill="#9d86d8"/><circle cx="216.5" cy="-0.9" r=".55" fill="#9d86d8"/><circle cx="220.8" cy="-6.9" r=".55" fill="#9d86d8"/><circle cx="199.4" cy="16.1" r=".55" fill="#b79be8"/><circle cx="206.2" cy="1.0" r=".55" fill="#9d86d8"/><circle cx="210.1" cy="0.6" r=".55" fill="#c3e2f2"/><circle cx="214.3" cy="27.2" r=".55" fill="#c3e2f2"/><circle cx="204.8" cy="8.9" r=".55" fill="#9d86d8"/><circle cx="213.1" cy="23.6" r=".55" fill="#b79be8"/><circle cx="229.4" cy="6.3" r=".55" fill="#9d86d8"/><circle cx="200.8" cy="21.5" r=".55" fill="#9d86d8"/><circle cx="231.7" cy="20.5" r=".55" fill="#b79be8"/><circle cx="203.8" cy="19.9" r=".55" fill="#9d86d8"/><circle cx="201.4" cy="-1.8" r=".55" fill="#c3e2f2"/><circle cx="199.1" cy="6.2" r=".55" fill="#b79be8"/><circle cx="220.7" cy="-6.6" r=".55" fill="#c3e2f2"/><circle cx="205.7" cy="27.6" r=".55" fill="#9d86d8"/><circle cx="211.8" cy="-5.9" r=".55" fill="#b79be8"/><circle cx="225.1" cy="6.1" r=".55" fill="#9d86d8"/><circle cx="231.2" cy="-0.0" r=".55" fill="#c3e2f2"/><ellipse cx="228" cy="4" rx="10.1" ry="10.1" fill="#c9a06c"/><ellipse cx="228" cy="4.5" rx="9" ry="9" fill="#a2825a"/></g><g><ellipse cx="219.5" cy="61" rx="19" ry="21.5" fill="#c9a06c"/><ellipse cx="219.5" cy="60.6" rx="17.6" ry="19.9" fill="#f8d2e8"/><ellipse cx="220" cy="60" rx="5.1" ry="9.1" fill="#c9a06c"/><ellipse cx="220" cy="60.5" rx="4" ry="8" fill="#a2825a"/></g><g><ellipse cx="216" cy="112" rx="22" ry="23" fill="#c9a06c"/><ellipse cx="216" cy="111.6" rx="20.6" ry="21.4" fill="#c7e5e6"/><circle cx="201.1" cy="108.3" r=".55" fill="#fff"/><circle cx="214.9" cy="127.4" r=".55" fill="#f4b8e4"/><circle cx="210.6" cy="119.9" r=".55" fill="#fff"/><circle cx="209.4" cy="122.7" r=".55" fill="#fff"/><circle cx="207.2" cy="112.7" r=".55" fill="#f4b8e4"/><circle cx="208.0" cy="116.0" r=".55" fill="#fff"/><circle cx="209.6" cy="96.1" r=".55" fill="#fff"/><circle cx="223.7" cy="123.0" r=".55" fill="#fff"/><circle cx="228.0" cy="107.5" r=".55" fill="#f4b8e4"/><circle cx="216.6" cy="99.1" r=".55" fill="#fff"/><circle cx="222.5" cy="99.7" r=".55" fill="#f4b8e4"/><circle cx="200.4" cy="109.6" r=".55" fill="#fff"/><circle cx="211.5" cy="123.5" r=".55" fill="#f4b8e4"/><circle cx="212.7" cy="121.7" r=".55" fill="#fff"/><ellipse cx="221" cy="118" rx="6.1" ry="9.1" fill="#c9a06c"/><ellipse cx="221" cy="118.5" rx="5" ry="8" fill="#a2825a"/></g><g><ellipse cx="161.5" cy="121.5" rx="35" ry="23" fill="#c9a06c"/><ellipse cx="161.5" cy="121.1" rx="33.6" ry="21.4" fill="#f4b9e2"/><circle cx="146.0" cy="116.7" r=".55" fill="#c58be8"/><circle cx="172.4" cy="127.5" r=".55" fill="#e99fe0"/><circle cx="189.4" cy="124.6" r=".55" fill="#c58be8"/><circle cx="180.8" cy="114.6" r=".55" fill="#c58be8"/><circle cx="172.8" cy="128.3" r=".55" fill="#d47fd0"/><circle cx="181.8" cy="127.1" r=".55" fill="#e99fe0"/><circle cx="184.3" cy="113.8" r=".55" fill="#e99fe0"/><circle cx="158.9" cy="134.7" r=".55" fill="#d47fd0"/><circle cx="146.9" cy="136.0" r=".55" fill="#e99fe0"/><circle cx="145.7" cy="119.9" r=".55" fill="#e99fe0"/><circle cx="141.0" cy="109.8" r=".55" fill="#d47fd0"/><circle cx="153.1" cy="104.5" r=".55" fill="#d47fd0"/><circle cx="167.6" cy="131.9" r=".55" fill="#c58be8"/><circle cx="156.2" cy="136.7" r=".55" fill="#d47fd0"/><circle cx="149.9" cy="114.7" r=".55" fill="#c58be8"/><circle cx="138.3" cy="113.3" r=".55" fill="#c58be8"/><circle cx="161.4" cy="132.3" r=".55" fill="#c58be8"/><circle cx="172.2" cy="115.1" r=".55" fill="#c58be8"/><circle cx="142.7" cy="128.6" r=".55" fill="#d47fd0"/><circle cx="135.4" cy="117.5" r=".55" fill="#c58be8"/><circle cx="147.3" cy="111.0" r=".55" fill="#c58be8"/><circle cx="141.1" cy="110.7" r=".55" fill="#d47fd0"/><circle cx="181.7" cy="114.0" r=".55" fill="#e99fe0"/><circle cx="177.0" cy="114.7" r=".55" fill="#e99fe0"/><circle cx="174.8" cy="114.7" r=".55" fill="#d47fd0"/><circle cx="173.9" cy="114.9" r=".55" fill="#d47fd0"/><circle cx="172.0" cy="128.7" r=".55" fill="#e99fe0"/><circle cx="183.1" cy="130.9" r=".55" fill="#e99fe0"/><circle cx="137.9" cy="117.4" r=".55" fill="#d47fd0"/><circle cx="141.6" cy="130.2" r=".55" fill="#d47fd0"/><circle cx="180.1" cy="129.5" r=".55" fill="#e99fe0"/><circle cx="185.6" cy="112.1" r=".55" fill="#d47fd0"/><circle cx="154.9" cy="107.4" r=".55" fill="#e99fe0"/><circle cx="137.2" cy="121.2" r=".55" fill="#d47fd0"/><circle cx="168.5" cy="108.9" r=".55" fill="#d47fd0"/><circle cx="183.2" cy="124.8" r=".55" fill="#c58be8"/><circle cx="179.1" cy="114.0" r=".55" fill="#d47fd0"/><circle cx="168.4" cy="131.4" r=".55" fill="#d47fd0"/><circle cx="189.2" cy="120.4" r=".55" fill="#d47fd0"/><circle cx="147.2" cy="116.6" r=".55" fill="#c58be8"/><circle cx="136.8" cy="125.3" r=".55" fill="#e99fe0"/><circle cx="145.6" cy="129.6" r=".55" fill="#e99fe0"/><circle cx="140.6" cy="127.6" r=".55" fill="#d47fd0"/><circle cx="151.5" cy="114.5" r=".55" fill="#d47fd0"/><circle cx="170.3" cy="133.4" r=".55" fill="#c58be8"/><circle cx="142.5" cy="134.1" r=".55" fill="#c58be8"/><ellipse cx="163" cy="124.5" rx="13.1" ry="5.3" fill="#c9a06c"/><ellipse cx="163" cy="125" rx="12" ry="4.2" fill="#a2825a"/></g><g><ellipse cx="94.7" cy="125.5" rx="26" ry="20" fill="#c9a06c"/><ellipse cx="94.7" cy="125.1" rx="24.6" ry="18.4" fill="#eecbf3"/><circle cx="102.7" cy="135.5" r=".55" fill="#b7a0e6"/><circle cx="89.7" cy="132.9" r=".55" fill="#d9a0e6"/><circle cx="108.7" cy="115.2" r=".55" fill="#a8d4ee"/><circle cx="83.5" cy="121.6" r=".55" fill="#d9a0e6"/><circle cx="113.3" cy="124.0" r=".55" fill="#a8d4ee"/><circle cx="92.6" cy="133.9" r=".55" fill="#d9a0e6"/><circle cx="98.0" cy="111.8" r=".55" fill="#a8d4ee"/><circle cx="103.9" cy="133.1" r=".55" fill="#d9a0e6"/><circle cx="88.5" cy="112.8" r=".55" fill="#b7a0e6"/><circle cx="79.9" cy="132.9" r=".55" fill="#b7a0e6"/><circle cx="98.6" cy="116.0" r=".55" fill="#b7a0e6"/><circle cx="108.7" cy="126.2" r=".55" fill="#d9a0e6"/><circle cx="103.6" cy="120.9" r=".55" fill="#a8d4ee"/><circle cx="110.9" cy="121.2" r=".55" fill="#a8d4ee"/><circle cx="97.8" cy="136.0" r=".55" fill="#b7a0e6"/><circle cx="80.6" cy="123.3" r=".55" fill="#a8d4ee"/><circle cx="83.7" cy="115.4" r=".55" fill="#a8d4ee"/><circle cx="105.2" cy="124.5" r=".55" fill="#d9a0e6"/><circle cx="104.7" cy="131.4" r=".55" fill="#a8d4ee"/><circle cx="85.8" cy="130.2" r=".55" fill="#b7a0e6"/><circle cx="88.4" cy="119.3" r=".55" fill="#a8d4ee"/><circle cx="94.6" cy="140.1" r=".55" fill="#d9a0e6"/><circle cx="80.5" cy="122.8" r=".55" fill="#d9a0e6"/><circle cx="75.9" cy="119.2" r=".55" fill="#d9a0e6"/><circle cx="78.7" cy="129.8" r=".55" fill="#d9a0e6"/><circle cx="79.8" cy="117.8" r=".55" fill="#b7a0e6"/><circle cx="79.5" cy="135.2" r=".55" fill="#a8d4ee"/><circle cx="82.8" cy="127.1" r=".55" fill="#a8d4ee"/><circle cx="78.7" cy="122.3" r=".55" fill="#a8d4ee"/><circle cx="108.5" cy="121.8" r=".55" fill="#d9a0e6"/><circle cx="83.8" cy="131.5" r=".55" fill="#d9a0e6"/><circle cx="90.9" cy="137.8" r=".55" fill="#d9a0e6"/><circle cx="110.3" cy="120.0" r=".55" fill="#d9a0e6"/><circle cx="91.7" cy="132.9" r=".55" fill="#b7a0e6"/><circle cx="80.2" cy="119.1" r=".55" fill="#a8d4ee"/><circle cx="95.1" cy="114.9" r=".55" fill="#a8d4ee"/><circle cx="94.6" cy="117.5" r=".55" fill="#d9a0e6"/><circle cx="105.1" cy="122.7" r=".55" fill="#b7a0e6"/><circle cx="80.9" cy="130.3" r=".55" fill="#b7a0e6"/><circle cx="105.6" cy="127.9" r=".55" fill="#d9a0e6"/><circle cx="104.7" cy="120.8" r=".55" fill="#b7a0e6"/><circle cx="85.5" cy="120.3" r=".55" fill="#d9a0e6"/><circle cx="84.7" cy="129.8" r=".55" fill="#b7a0e6"/><circle cx="87.3" cy="132.4" r=".55" fill="#a8d4ee"/><circle cx="78.5" cy="130.0" r=".55" fill="#a8d4ee"/><circle cx="81.0" cy="118.1" r=".55" fill="#d9a0e6"/><ellipse cx="95" cy="127" rx="9.1" ry="4.1" fill="#c9a06c"/><ellipse cx="95" cy="127.5" rx="8" ry="3" fill="#a2825a"/></g><g><ellipse cx="2" cy="76.8" rx="23.5" ry="33" fill="#c9a06c"/><ellipse cx="2" cy="76.4" rx="22.1" ry="31.4" fill="#f7d7f0"/><path d="M-17.325 85.95 l21.15 -18.15" stroke="#fff" stroke-opacity=".75" stroke-width="1.6" stroke-linecap="round"/><path d="M-14.125 87.15 l21.15 -18.15" stroke="#fff" stroke-opacity=".75" stroke-width="1.6" stroke-linecap="round"/><path d="M-10.925 88.35 l21.15 -18.15" stroke="#fff" stroke-opacity=".75" stroke-width="1.6" stroke-linecap="round"/><path d="M-7.725 89.55 l21.15 -18.15" stroke="#fff" stroke-opacity=".75" stroke-width="1.6" stroke-linecap="round"/><path d="M-4.525 90.75 l21.15 -18.15" stroke="#fff" stroke-opacity=".75" stroke-width="1.6" stroke-linecap="round"/><ellipse cx="-6" cy="74" rx="7.1" ry="10.1" fill="#c9a06c"/><ellipse cx="-6" cy="74.5" rx="6" ry="9" fill="#a2825a"/></g><g><ellipse cx="-2" cy="128" rx="16" ry="12" fill="#c9a06c"/><ellipse cx="-2" cy="127.6" rx="14.6" ry="10.4" fill="#f3e6da"/><ellipse cx="-4" cy="130" rx="6.1" ry="5.1" fill="#c9a06c"/><ellipse cx="-4" cy="130.5" rx="5" ry="4" fill="#a2825a"/></g>
<rect width="218" height="127" fill="url(#fadeW)"/>
</svg></div><div class="n">18</div></div>

<!-- 19 -->
<div class="th" style="left:1608.13px"><div class="in"><svg width="218" height="127" viewBox="0 0 218 127">

<defs><pattern id="ms" patternUnits="userSpaceOnUse" width="2.6" height="2.6" patternTransform="rotate(8)"><rect width="2.6" height="2.6" fill="#a48556"/><path d="M0 0H2.6M0 0V2.6" stroke="#5c4526" stroke-width=".7"/></pattern></defs>
<!-- volleyball -->
<circle cx="13.5" cy="9.5" r="17.2" fill="#3d4b8b"/>
<path d="M-2 8C4 3 11 2 16 3.4C22 5 27 9 28.4 12.8C28 15.4 27 17.4 25.6 18.8C21 15.6 17 14.6 13 15.2C8 16 3 18.4 -2 21Z" fill="#9cc4ef"/>
<!-- bowling pin -->
<path d="M41.5 -2C44.5 -2 45 2 44.6 4.5C44.4 7 47 9.5 46.8 12.6C46.6 16 44.2 17.6 41.5 17.6C38.8 17.6 36.4 16 36.2 12.6C36 9.5 38.6 7 38.4 4.5C38 2 38.5 -2 41.5 -2Z" fill="#fbf9f6"/>
<!-- racket top -->
<ellipse cx="66.5" cy="1.6" rx="15.2" ry="10.6" fill="url(#ms)" stroke="#3f4d9e" stroke-width="1.1"/>
<!-- yellow ball -->
<circle cx="57.5" cy="21.3" r="6.9" fill="#f4d163"/><circle cx="56" cy="19.5" r="3.4" fill="#f8dc80"/>
<!-- hockey stick blade -->
<path d="M88 1L95 -1C99 6 106 10 113 12.5L110.5 18C101 16.5 93 10.5 88 1Z" fill="#1f1f1f"/>
<path d="M86 0L91 -2L93 1L88 3Z" fill="#e2a070"/>
<!-- soccer ball -->
<ellipse cx="119.4" cy="-3" rx="17" ry="13.6" fill="#f7f7f5"/>
<path d="M112 1l8 -3 7 3 -3 4h-8z" fill="#1b1b1b"/><path d="M104 -1l5 -2 2 3 -4 3z" fill="#1b1b1b"/><path d="M131 -2l5 0 -2 5 -4 1z" fill="#1b1b1b"/>
<!-- black helmet/ball -->
<ellipse cx="157" cy="0" rx="13.6" ry="10.6" fill="#151515"/><ellipse cx="155" cy="-1" rx="5.4" ry="2.6" fill="#f2f2f2"/>
<!-- red ball top right -->
<ellipse cx="190.4" cy="6.8" rx="18.8" ry="15.4" fill="#d4625e"/><ellipse cx="193" cy="12" rx="15" ry="9" fill="#c85a57" fill-opacity=".55"/>
<!-- puck -->
<g transform="rotate(24 170.5 19.8)"><rect x="162.4" y="15.8" width="16.4" height="8" rx="3.6" fill="#1e1e1e"/><ellipse cx="170.6" cy="16.6" rx="8" ry="2.4" fill="#2f2f2f"/></g>
<!-- bowling ball -->
<circle cx="208.4" cy="39.6" r="21.8" fill="#3e4b8b"/><circle cx="214" cy="32" r="12" fill="#4a5898" fill-opacity=".6"/>
<ellipse cx="201.2" cy="27.4" rx="1.7" ry="1.4" fill="#14141c"/><ellipse cx="207.2" cy="27.4" rx="1.7" ry="1.4" fill="#14141c"/><ellipse cx="202" cy="33" rx="1.8" ry="1.5" fill="#14141c"/>
<!-- racket right -->
<ellipse cx="210" cy="81.3" rx="15.6" ry="17.4" fill="url(#ms)" stroke="#3f4d9e" stroke-width="1.2"/>
<!-- red ball bottom right -->
<circle cx="206" cy="119" r="19" fill="#d3625e"/>
<!-- yellow ball -->
<circle cx="178.8" cy="106.9" r="6.9" fill="#f4d163"/><circle cx="177.4" cy="105.2" r="3.4" fill="#f8dc80"/>
<!-- skate/boot -->
<path d="M184.5 120.5L209 112.5L215 118L200 127H186Z" fill="#8a5a3a" stroke="#2a1a10" stroke-width=".8"/>
<path d="M192.5 115.5v5M196 114.5v5" stroke="#111" stroke-width="1.8"/>
<!-- glove/hand -->
<path d="M145 127C147 121 151 119 155 120.5L160 118C162 113 166 113 168 116C170 113 174 114 175 118C178 117 181 119 181.5 123L183 127Z" fill="#f1cfa6"/>
<rect x="150" y="119.4" width="10" height="7.6" fill="#d9a57c" transform="rotate(-12 155 123)"/>
<!-- racket bottom -->
<ellipse cx="126.2" cy="127.6" rx="12.8" ry="9.2" fill="url(#ms)" stroke="#e98b5c" stroke-width="1.3"/>
<!-- basketball -->
<circle cx="87" cy="135.5" r="21" fill="#e98b4f"/><path d="M80 116C82 122 82 126 81 128M98 119C95 122 93 125 92 128" stroke="#7a3f1c" stroke-width=".7" fill="none"/>
<!-- brown puck -->
<g transform="rotate(24 60 116)"><rect x="52" y="112" width="16" height="8.4" rx="3.8" fill="#6a5034"/><ellipse cx="60" cy="113" rx="7.8" ry="2.4" fill="#7b5f40"/></g>
<!-- boxing glove -->
<path d="M0 58C6 55 14 55.5 20 58.5C26 62 27.5 70 26 77C25 82 21 85.5 14 86.5C9 87 4 86 0 85Z" fill="#d8655f"/>
<path d="M4 60C10 58 16 60 20 64" stroke="#e57c76" stroke-width="1.6" fill="none"/>
<!-- golf club -->
<path d="M0 31L13 36.5L11.6 39.6L0 35Z" fill="#f4f4f4"/><path d="M4.4 32.8l4 1.7-1.2 3-4-1.6z" fill="#3d4b9b"/>
<path d="M12 36.4C16 34 19 29 21 24.5C23 21.5 27 22 28.6 25C30.4 29 27 36 23 39C20 41.2 16.5 40.4 11.6 39.4Z" fill="#cfcfcf"/><path d="M20 27C22 24.6 25.6 24.6 26.8 27" stroke="#e9e9e9" stroke-width="1.3" fill="none"/>
<!-- shuttlecock -->
<path d="M0 42L11.5 45.5L9.6 53.4L0 51Z" fill="url(#ms)"/>
<circle cx="13.6" cy="49.4" r="4.1" fill="#fbfbfb"/><path d="M10.4 45.4l1.6.4-1.8 7.4-1.6-.4z" fill="#d9534f"/>
<!-- bottom-left tan items (faded) -->
<rect x="-2" y="88" width="28" height="20" fill="#bb9a72" transform="rotate(-4 12 98)"/>
<path d="M0 104L18 108L27 117L26 127H0Z" fill="#b39069"/>
<path d="M6 110L16 113L18 121L9 124L3 118Z" fill="#a6845c"/><path d="M18 121L27 118M16 113L22 109M9 124L8 127" stroke="#8d7252" stroke-width=".8"/>
<path d="M30 127C34 121 42 118 52 121L50 127Z" fill="#bfa07a"/>

</svg></div><div class="n">19</div></div>

<!-- 20 -->
<div class="th" style="left:1859.56px"><div class="in"><svg width="218" height="127" viewBox="0 0 218 127">
<rect width="218" height="127" fill="url(#kraft)"/><rect width="218" height="127" filter="url(#grain)"/>
<rect width="218" height="127" fill="url(#fadeW)"/>
</svg></div></div>
<!-- borders -->
<svg class="abs" style="left:0;top:1130px" width="1870" height="140" viewBox="0 1130 1870 140" fill="none" stroke="#d3d7e0" stroke-width="1.5"><rect x="100.30" y="1137.95" width="216.1" height="126" rx="10.3"/><rect x="351.73" y="1137.95" width="216.1" height="126" rx="10.3"/><rect x="603.16" y="1137.95" width="216.1" height="126" rx="10.3"/><rect x="854.59" y="1137.95" width="216.1" height="126" rx="10.3"/><rect x="1106.02" y="1137.95" width="216.1" height="126" rx="10.3"/><rect x="1357.45" y="1137.95" width="216.1" height="126" rx="10.3"/><rect x="1608.88" y="1137.95" width="216.1" height="126" rx="10.3"/><rect x="1860.31" y="1137.95" width="216.1" height="126" rx="10.3"/></svg>

<div id="bar"><div class="top"></div>
<div class="abs" style="left:1228px;top:38.2px;width:380px;height:7.6px;border-radius:4px;background:#d1d5de"></div>
<div class="abs" style="left:1601.8px;top:39.8px;width:4.4px;height:4.4px;border-radius:50%;background:#8b8f99"></div>
<div class="abs" style="left:1211.5px;top:25.4px;width:32.8px;height:32.8px;border-radius:50%;background:linear-gradient(#fdfdfd,#f4f4f6);box-shadow:0 0 0 1.9px #d3d6de,0 1.5px 6px 1.5px rgba(40,50,80,.13)"></div>
<div class="abs t" style="left:1658.2px;top:27.6px;font-size:28px;line-height:31px;-webkit-text-stroke:.95px #0e1318;letter-spacing:1.9px;color:#0e1318">10%</div>
<div class="abs" style="left:1769.4px;top:26.6px;width:3.6px;height:31px;border-radius:2px;background:#d3d6de"></div>
<div class="abs" style="left:1789.5px;top:10px;width:120px;height:63.5px;border-radius:14px;background:linear-gradient(#d9dce3,#d0d3da)"></div>
<svg class="abs" style="left:1795px;top:18px" width="60" height="48" viewBox="1795 1324 60 48" fill="none" stroke="#0e1318" stroke-width="2.8" stroke-linejoin="round">
<rect x="1804.4" y="1331.4" width="33.4" height="17"  rx="1.2"/>
<rect x="1804.4" y="1355.4" width="33.4" height="9.2" rx="1.2"/>
<path d="M1815.5 1355.4v9.2M1826.7 1355.4v9.2"/>
</svg>
<div class="abs t" style="left:1853.2px;top:27.6px;font-size:28px;line-height:31px;-webkit-text-stroke:.95px #0e1318;color:#0e1318">P</div>
</div>
<div class="abs" style="left:0;top:1388px;width:1870px;height:8px;background:#8e9070"></div>
<div class="abs" style="left:0;top:1388px;width:1870px;height:4.2px;background:linear-gradient(90deg,#1c1d0c 0,#34361a 9%,#23230f 16%,#3f4020 21%,#1f200e 30%,#2c2a18 40%,#3d382b 48%,#4a463a 56%,#2a2516 62%,#1f1f0e 70%,#33351a 78%,#44481e 86%,#23250f 100%)"></div>
<svg class="abs" style="left:0;top:1388px" width="1870" height="4.2"><filter id="mott" x="0" y="0" width="100%" height="100%"><feTurbulence type="fractalNoise" baseFrequency=".09 .45" numOctaves="3" seed="3"/><feColorMatrix type="matrix" values="0 0 0 0 .42  0 0 0 0 .44  0 0 0 0 .33  2.2 0 0 0 -1.1"/></filter><rect width="1870" height="4.2" filter="url(#mott)"/></svg>
<div class="abs" style="left:0;top:1392px;width:1870px;height:4px;background:linear-gradient(90deg,#a29d74 0,#a6a27c 20%,#9d9a78 45%,#949279 70%,#8a8c6c 100%)"></div>

</body></html>
